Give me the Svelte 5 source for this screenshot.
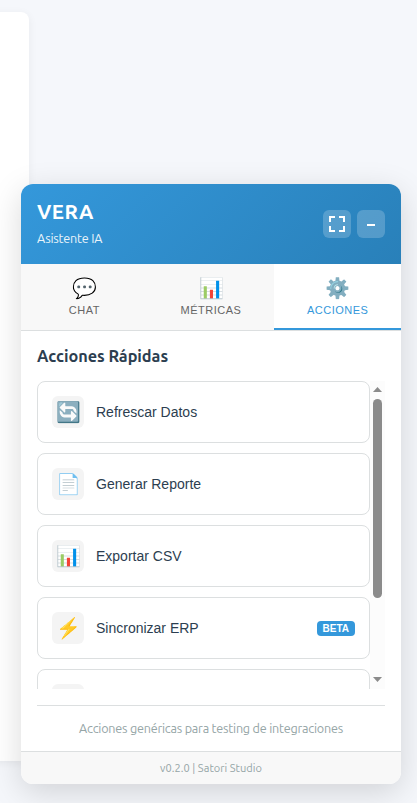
<script>
  const tabs = [
    { icon: '💬', label: 'Chat' },
    { icon: '📊', label: 'Métricas' },
    { icon: '⚙️', label: 'Acciones' }
  ];
  const actions = [
    { icon: '🔄', label: 'Refrescar Datos' },
    { icon: '📄', label: 'Generar Reporte' },
    { icon: '📊', label: 'Exportar CSV' },
    { icon: '⚡', label: 'Sincronizar ERP', badge: 'BETA' },
    { icon: '', label: '' }
  ];
  let active = $state('Acciones');
</script>

<div class="page">
  <div class="backdrop-card"></div>
  <section class="widget">
    <header>
      <div class="brand">
        <h1><span>VERA</span></h1>
        <p><span>Asistente IA</span></p>
      </div>
      <div class="controls">
        <button aria-label="Expandir">
          <svg width="16" height="16" viewBox="0 0 16 16" fill="none" stroke="#fff" stroke-width="2">
            <path d="M1 6V1h5M10 1h5v5M15 10v5h-5M6 15H1v-5" />
          </svg>
        </button>
        <button aria-label="Minimizar">
          <svg width="16" height="16" viewBox="0 0 16 16" fill="#fff"><path d="M4 8h8v2H4z" /></svg>
        </button>
      </div>
    </header>

    <nav>
      {#each tabs as tab}
        <button class:active={active === tab.label} onclick={() => (active = tab.label)}>
          <span class="tab-icon">{tab.icon}</span>
          <span class="tab-label">{tab.label}</span>
        </button>
      {/each}
    </nav>

    <main>
      <h2><span>Acciones Rápidas</span></h2>
      <div class="scroller">
        <div class="list">
          {#each actions as action}
            <div class="action">
              <span class="action-icon">{action.icon}</span>
              <span class="action-label">{action.label}</span>
              {#if action.badge}<span class="badge">{action.badge}</span>{/if}
            </div>
          {/each}
        </div>
        <div class="scrollbar">
          <svg width="9" height="5" viewBox="0 0 9 5" fill="#8b8b8b"><path d="M4.5 0L9 5H0z" /></svg>
          <div class="thumb"></div>
          <svg class="down" width="9" height="5" viewBox="0 0 9 5" fill="#8b8b8b"><path d="M0 0h9L4.5 5z" /></svg>
        </div>
      </div>
      <p class="note"><span>Acciones genéricas para testing de integraciones</span></p>
    </main>
    <footer><span>v0.2.0 | Satori Studio</span></footer>
  </section>
</div>

<style>
  .page {
    position: relative;
    width: 417px;
    height: 803px;
    overflow: hidden;
    background: #f5f7fb;
    font-family: Ubuntu, 'Noto Sans', sans-serif;
    color: #2c3e50;
  }
  .page * { box-sizing: border-box; }
  h1, h2, p { margin: 0; }
  button { border: 0; padding: 0; font: inherit; cursor: pointer; }
  .backdrop-card {
    position: absolute;
    left: -20px;
    top: 12px;
    width: 49px;
    height: 749px;
    border-radius: 8px;
    background: #fff;
    box-shadow: 0 2px 10px rgba(0, 0, 0, 0.06);
  }
  .widget {
    position: absolute;
    left: 21px;
    top: 184px;
    width: 380px;
    height: 600px;
    display: flex;
    flex-direction: column;
    overflow: hidden;
    border-radius: 12px;
    background: #fff;
    box-shadow: 0 8px 32px rgba(0, 0, 0, 0.15);
  }
  header {
    height: 80px;
    flex: none;
    display: flex;
    align-items: center;
    justify-content: space-between;
    padding: 0 16px;
    color: #fff;
    background: linear-gradient(135deg, #3498db, #2980b9);
  }
  h1 { font-size: 20.5px; line-height: 24px; font-weight: 700; letter-spacing: 0.45px; }
  .brand p { margin-top: 4px; padding-bottom: 1px; font-size: 12.6px; line-height: 20px; opacity: 0.9; letter-spacing: -0.2px; }
  .controls { display: flex; gap: 6px; }
  .controls button {
    width: 28px;
    height: 28px;
    display: grid;
    place-items: center;
    border-radius: 6px;
    background: rgba(255, 255, 255, 0.2);
  }
  nav {
    height: 67px;
    flex: none;
    display: flex;
    border-bottom: 1px solid #dcdfe0;
    background: #f8f8f8;
  }
  nav button {
    flex: 1;
    display: flex;
    flex-direction: column;
    align-items: center;
    padding-top: 12px;
    background: none;
    border-bottom: 2px solid transparent;
    color: #666;
    font-family: 'Liberation Sans', Arial, sans-serif;
  }
  nav .active { background: #fff; color: #3498db; border-bottom-color: #3498db; }
  .tab-icon { height: 24px; font-size: 20px; line-height: 24px; }
  .tab-label { margin-top: 4px; font-size: 11px; line-height: 12px; letter-spacing: 0.5px; text-transform: uppercase; }
  main { flex: 1; min-height: 0; display: flex; flex-direction: column; padding: 14px 16px 0; }
  h2 { font-size: 16.3px; line-height: 22px; font-weight: 700; letter-spacing: -0.03px; }
  .scroller { height: 308px; flex: none; display: flex; margin-top: 14px; overflow: hidden; }
  .list { flex: 1; display: flex; flex-direction: column; gap: 10px; }
  .action {
    height: 62px;
    flex: none;
    display: flex;
    align-items: center;
    gap: 12px;
    padding: 0 14px;
    border: 1px solid #dcdfe0;
    border-radius: 8px;
    font: 14px 'Liberation Sans', Arial, sans-serif;
  }
  .action-icon {
    width: 32px;
    height: 32px;
    display: grid;
    place-items: center;
    border-radius: 6px;
    background: #f4f4f4;
    font-size: 20px;
    line-height: 24px;
  }
  .badge {
    margin-left: auto;
    height: 15px;
    padding: 0 6px;
    border-radius: 4px;
    background: #3498db;
    color: #fff;
    font-size: 10px;
    font-weight: 700;
    line-height: 15px;
  }
  .scrollbar {
    width: 15px;
    display: flex;
    flex-direction: column;
    align-items: center;
    padding: 6px 0 7px;
    background: #fcfcfc;
  }
  .scrollbar svg { flex: none; }
  .thumb { width: 9px; height: 199px; margin-top: 7px; border-radius: 5px; background: #8b8b8b; }
  .down { margin-top: auto; }
  .note {
    margin-top: 16px;
    padding-top: 12px;
    border-top: 1px solid #dcdfe0;
    text-align: center;
    font-size: 12.6px;
    line-height: 20px;
    letter-spacing: -0.21px;
    color: #95a5a6;
    white-space: nowrap;
  }
  footer {
    height: 33px;
    flex: none;
    border-top: 1px solid #dcdfe0;
    background: #f8f8f8;
    text-align: center;
    font-size: 11px;
    line-height: 33px;
    letter-spacing: 0.05px;
    color: #95a5a6;
  }
</style>
